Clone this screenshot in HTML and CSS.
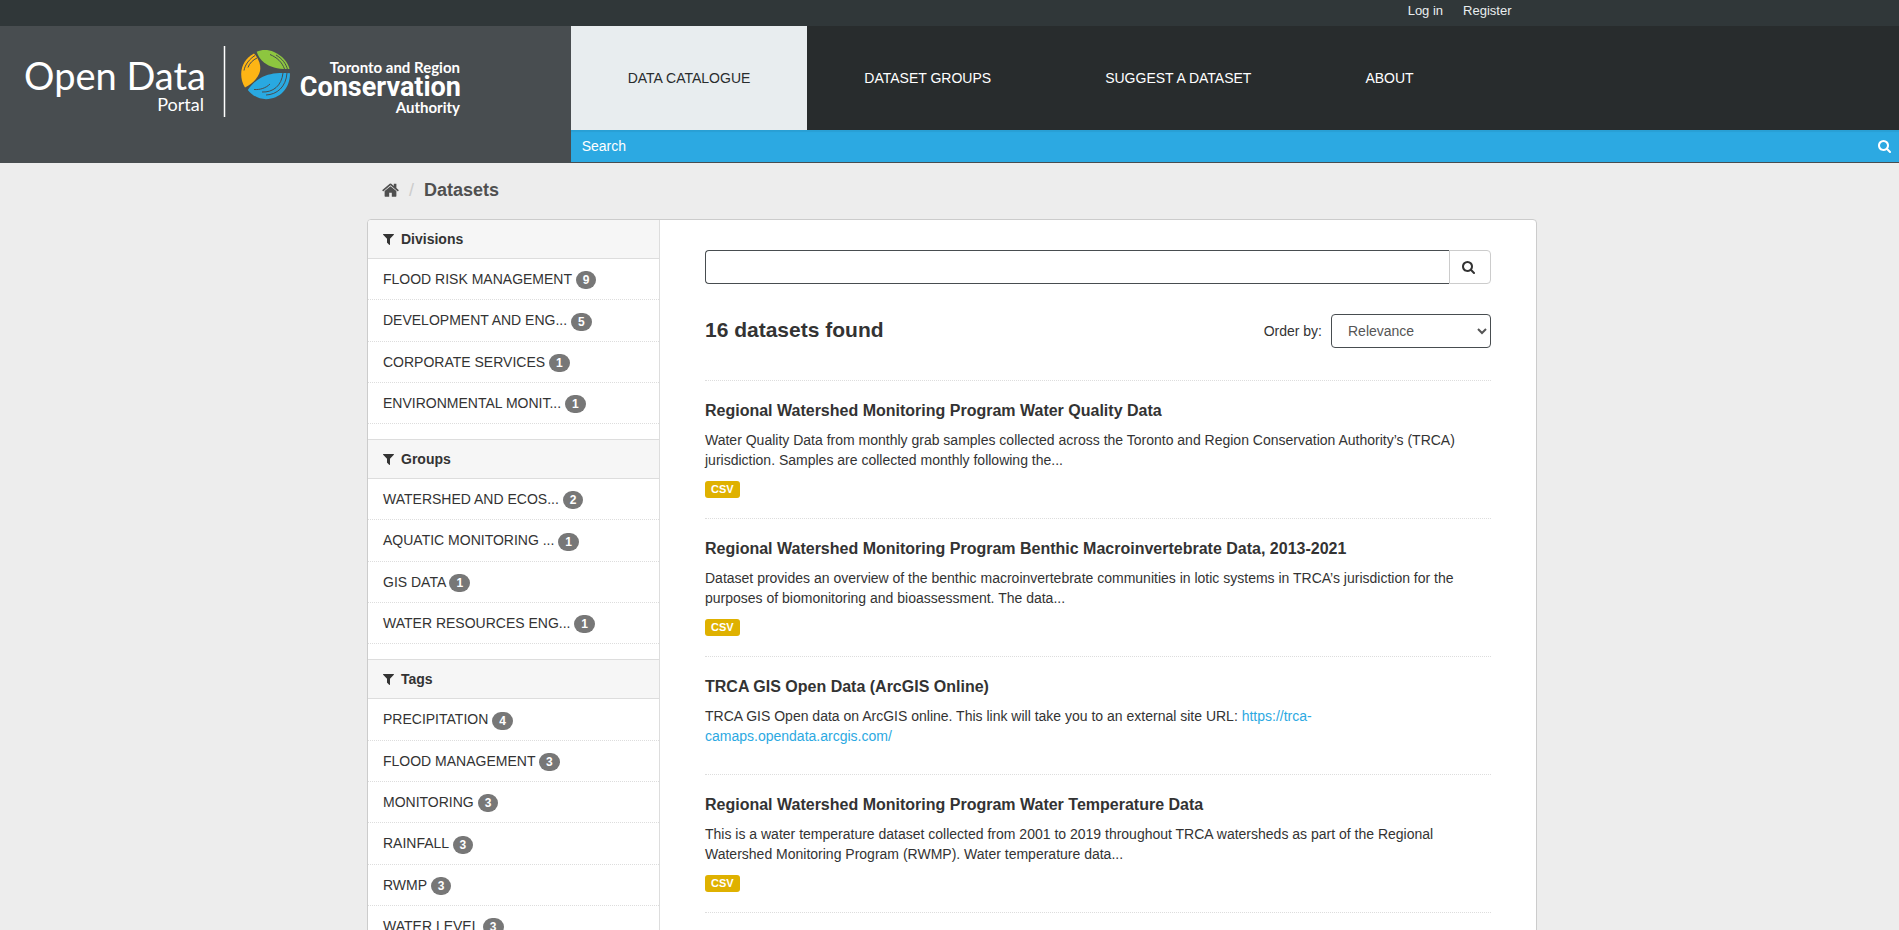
FILE: index.html
```
<!DOCTYPE html>
<html lang="en">
<head>
  <meta charset="UTF-8">
  <meta name="viewport" content="width=device-width, initial-scale=1.0">
  <title>Datasets - TRCA Open Data Portal</title>
  <link rel="stylesheet" href="styles.css">
</head>
<body>
  <!-- icon sprites -->
  <svg class="sprites" aria-hidden="true">
    <symbol id="icon-search" viewBox="0 0 1664 1664"><path d="M1152 704q0-185-131.500-316.500t-316.500-131.500-316.500 131.500-131.500 316.500 131.500 316.500 316.500 131.500 316.500-131.500 131.500-316.500zm512 832q0 52-38 90t-90 38q-54 0-90-38l-343-342q-179 124-399 124-143 0-273.500-55.500t-225-150-150-225-55.500-273.500 55.500-273.500 150-225 225-150 273.500-55.500 273.500 55.500 225 150 150 225 55.500 273.500q0 220-124 399l343 343q37 37 37 90z"/></symbol>
    <symbol id="icon-filter" viewBox="0 0 1410 1408"><path d="M1403 39q17 41-14 70l-493 493v742q0 42-39 59-13 5-25 5-27 0-45-19l-256-256q-19-19-19-45v-486l-493-493q-31-29-14-70 17-39 59-39h1280q42 0 59 39z"/></symbol>
    <symbol id="icon-home" viewBox="0 0 1664 1312"><path d="M1408 768v480q0 26-19 45t-45 19h-384v-384h-256v384h-384q-26 0-45-19t-19-45v-480q0-1 .5-3t.5-3l575-474 575 474q1 2 1 6zm223-69l-62 74q-8 9-21 11h-3q-13 0-21-7l-692-577-692 577q-12 8-24 7-13-2-21-11l-62-74q-8-10-7-23.500t11-21.500l719-599q32-26 76-26t76 26l244 204v-195q0-14 9-23t23-9h192q14 0 23 9t9 23v408l219 182q10 8 11 21.500t-7 23.500z"/></symbol>
  </svg>

  <div class="account">
    <nav class="account-links" aria-label="Account">
      <a href="#">Log in</a>
      <a href="#">Register</a>
    </nav>
  </div>

  <header class="masthead">
    <a class="logo" href="#" aria-label="Open Data Portal, Toronto and Region Conservation Authority">
      <svg width="470" height="100" viewBox="0 26 470 100">
        <text class="logo-title" x="206" y="90">Open Data</text>
        <text class="logo-sub" x="204" y="111">Portal</text>
        <path d="M224.500 46V117" stroke="#fff" stroke-width="1.500"/>
        <path fill="#8dc63f" d="M256.700 51.700C262 49.500 268 49.500 274 52C282 55.500 288 62 289.500 69C280 69.500 270 67.500 264 62.500C260.500 59.500 258 56 256.700 51.700Z"/>
        <path fill="#fdb515" d="M254 53.500C246 58 241.200 65 241.200 74C241.200 79 242.500 84 245 87.500C252 84 258.500 78 260 71C261.200 65 258.500 58.500 254 53.500Z"/>
        <path fill="#29a9e1" d="M290 73.300C278 72.500 268 73.500 260.500 78C255 81 251 85.500 247.800 90C252 95.500 259 99.200 266 99.200C280 99 290 88.500 290 73.300Z"/>
        <path class="logo-groove" d="M270 54.500C277 57.500 282 62 284.500 69M276 55C282 58.500 286 63.500 287.500 69.500M244 70.500C245 64.500 249.500 59 255 55.500M248 67.500C249.500 63 253 60 257 58M262 92C273 92.500 281.500 86 283 73M266 95C277 94.500 286 87 287 73M254 89.500C260 90 266 88 270 84"/>
        <text class="logo-name" x="460" y="73">Toronto and Region</text>
        <text class="logo-brand" x="461" y="96">Conservation</text>
        <text class="logo-name" x="460" y="113">Authority</text>
      </svg>
    </a>
    <div class="masthead-main">
      <nav class="main-nav" aria-label="Main">
        <a class="active" href="#">DATA CATALOGUE</a>
        <a href="#">DATASET GROUPS</a>
        <a href="#">SUGGEST A DATASET</a>
        <a href="#">ABOUT</a>
      </nav>
      <form class="site-search">
        <input type="text" placeholder="Search" aria-label="Search datasets">
        <button type="submit" aria-label="Search"><svg class="icon"><use href="#icon-search"/></svg></button>
      </form>
    </div>
  </header>

  <div class="main">
    <div class="container">
      <nav class="breadcrumb" aria-label="Breadcrumb">
        <a href="#" aria-label="Home"><svg class="icon-home"><use href="#icon-home"/></svg></a>
        <span class="divider">/</span>
        <a class="current" href="#">Datasets</a>
      </nav>

      <div class="wrapper">
        <aside class="sidebar">
          <section class="facet">
            <h2><svg class="icon-filter"><use href="#icon-filter"/></svg>Divisions</h2>
            <ul>
              <li><a href="#">FLOOD RISK MANAGEMENT <span class="badge">9</span></a></li>
              <li><a href="#">DEVELOPMENT AND ENG... <span class="badge">5</span></a></li>
              <li><a href="#">CORPORATE SERVICES <span class="badge">1</span></a></li>
              <li><a href="#">ENVIRONMENTAL MONIT... <span class="badge">1</span></a></li>
            </ul>
          </section>
          <section class="facet">
            <h2><svg class="icon-filter"><use href="#icon-filter"/></svg>Groups</h2>
            <ul>
              <li><a href="#">WATERSHED AND ECOS... <span class="badge">2</span></a></li>
              <li><a href="#">AQUATIC MONITORING ... <span class="badge">1</span></a></li>
              <li><a href="#">GIS DATA <span class="badge">1</span></a></li>
              <li><a href="#">WATER RESOURCES ENG... <span class="badge">1</span></a></li>
            </ul>
          </section>
          <section class="facet">
            <h2><svg class="icon-filter"><use href="#icon-filter"/></svg>Tags</h2>
            <ul>
              <li><a href="#">PRECIPITATION <span class="badge">4</span></a></li>
              <li><a href="#">FLOOD MANAGEMENT <span class="badge">3</span></a></li>
              <li><a href="#">MONITORING <span class="badge">3</span></a></li>
              <li><a href="#">RAINFALL <span class="badge">3</span></a></li>
              <li><a href="#">RWMP <span class="badge">3</span></a></li>
              <li><a href="#">WATER LEVEL <span class="badge">3</span></a></li>
            </ul>
          </section>
        </aside>

        <main class="primary">
          <form class="search-form">
            <div class="search-group">
              <input type="text" aria-label="Search datasets">
              <button type="submit" aria-label="Submit search"><svg class="icon"><use href="#icon-search"/></svg></button>
            </div>
            <div class="search-summary">
              <h1>16 datasets found</h1>
              <div class="order-by">
                <label for="order">Order by:</label>
                <select id="order">
                  <option>Relevance</option>
                  <option>Name Ascending</option>
                  <option>Name Descending</option>
                  <option>Last Modified</option>
                </select>
              </div>
            </div>
          </form>

          <ul class="dataset-list">
            <li>
              <h3><a href="#">Regional Watershed Monitoring Program Water Quality Data</a></h3>
              <p>Water Quality Data from monthly grab samples collected across the Toronto and Region Conservation Authority’s (TRCA) jurisdiction. Samples are collected monthly following the...</p>
              <a class="label" href="#">CSV</a>
            </li>
            <li>
              <h3><a href="#">Regional Watershed Monitoring Program Benthic Macroinvertebrate Data, 2013-2021</a></h3>
              <p>Dataset provides an overview of the benthic macroinvertebrate communities in lotic systems in TRCA’s jurisdiction for the purposes of biomonitoring and bioassessment. The data...</p>
              <a class="label" href="#">CSV</a>
            </li>
            <li>
              <h3><a href="#">TRCA GIS Open Data (ArcGIS Online)</a></h3>
              <p>TRCA GIS Open data on ArcGIS online. This link will take you to an external site URL: <a href="#">https://trca-<br>camaps.opendata.arcgis.com/</a></p>
            </li>
            <li>
              <h3><a href="#">Regional Watershed Monitoring Program Water Temperature Data</a></h3>
              <p>This is a water temperature dataset collected from 2001 to 2019 throughout TRCA watersheds as part of the Regional Watershed Monitoring Program (RWMP). Water temperature data...</p>
              <a class="label" href="#">CSV</a>
            </li>
            <li></li>
          </ul>
        </main>
      </div>
    </div>
  </div>
</body>
</html>
```

FILE: styles.css
```
* { box-sizing: border-box; }
body { margin: 0; font-family: Arial, "Liberation Sans", sans-serif; font-size: 14px; line-height: 20px;
       color: #333; background: #ededed; }
a { color: #333; text-decoration: none; }
h1, h2, h3, p, ul { margin: 0; padding: 0; }
ul { list-style: none; }
input, button, select { font-family: inherit; font-size: 14px; margin: 0; }
svg { display: block; }
.sprites { display: none; }
.icon { width: 13px; height: 13px; fill: currentColor; }

/* account bar */
.account { height: 26px; background: #303739; }
.account-links { display: flex; justify-content: flex-end; gap: 20px;
                 max-width: 1170px; margin: 0 auto; padding-right: 23px; }
.account-links a { color: #eaeeef; font-size: 13px; line-height: 22px; }

/* header */
.masthead { display: flex; background: #484d50; border-bottom: 1px solid #484d50; }
.logo { flex: 0 0 calc(30% + 1px); overflow: hidden; }
.logo text { text-anchor: end; fill: #fff; }
.logo-title { font: 400 38px Lato, sans-serif; }
.logo-sub { font: 400 18px Lato, sans-serif; }
.logo-name { font: 700 15px Lato, sans-serif; }
.logo-brand { font: 700 27px Roboto, sans-serif; }
.logo-groove { fill: none; stroke: #484d50; stroke-width: 1; }
.masthead-main { flex: 1; min-width: 0; }
.main-nav { display: flex; background: #282c2d; }
.main-nav a { padding: 42px 57px; color: #fff; line-height: 20px; }
.main-nav a.active { background: #e8edef; color: #282c2d; }
.site-search { display: flex; height: 32px; background: #2ca9e2; box-shadow: inset 0 2px 1px rgba(0,0,0,0.06); }
.site-search input { flex: 1; border: none; background: none; padding: 0 11px; color: #fff; }
.site-search input::placeholder { color: #fff; opacity: 1; }
.site-search button { border: none; background: none; padding: 0 8px; color: #fff; }

/* content */
.main { padding-left: 5px; }
.container { max-width: 1170px; margin: 0 auto; }
.breadcrumb { display: flex; align-items: center; padding: 0 15px 2px; height: 56px; font-size: 18px; line-height: 20px; }
.icon-home { width: 17px; height: 14px; fill: #505050; }
.divider { color: #ccc; padding: 0 10px; }
.breadcrumb .current { color: #505050; font-weight: bold; }
.wrapper { display: flex; background: #fff; border: 1px solid #ccc; border-radius: 4px; overflow: hidden; }

/* facets */
.sidebar { flex: 0 0 25%; border-right: 1px solid #ddd; }
.facet { padding-bottom: 15px; }
.facet h2 { display: flex; align-items: center; gap: 7px; padding: 10px 15px; font-size: 14px; line-height: 18px;
            background: #f6f6f6; border-top: 1px solid #ddd; border-bottom: 1px solid #ddd; }
.facet:first-child h2 { border-top: none; }
.icon-filter { width: 11px; height: 11px; fill: #333; }
.facet li { border-bottom: 1px dotted #ddd; }
.facet li a { display: block; padding: 10px 15px; }
.badge { display: inline-block; vertical-align: middle; padding: 3px 7px; border-radius: 10px;
         background: #777; color: #fff; font-size: 12px; font-weight: bold; line-height: 12px; }

/* search */
.primary { flex: 1; min-width: 0; padding: 30px 45px; }
.search-group { display: flex; }
.search-group input { flex: 1; height: 34px; padding: 6px 12px; border: 1px solid #484d50; border-right: none; border-radius: 4px 0 0 4px; }
.search-group button { width: 42px; padding: 0 12px; background: #fff; color: #333; border: 1px solid #ccc; border-radius: 0 4px 4px 0; }
.search-summary { display: flex; justify-content: space-between; align-items: flex-start; margin: 30px 0 32px; }
.search-summary h1 { font-size: 21px; line-height: 32px; }
.order-by { display: flex; align-items: center; gap: 9px; }
.order-by select { width: 160px; height: 34px; padding: 6px 12px; color: #555; background: #fff; border: 1px solid #484d50; border-radius: 4px; }

/* results */
.dataset-list li { border-top: 1px dotted #ddd; padding: 20px 0; min-height: 118px; }
.dataset-list h3 { font-size: 16px; line-height: 20px; margin-bottom: 9px; }
.dataset-list p { line-height: 20px; }
.dataset-list p a { color: #2ca9e2; }
.label { display: inline-block; vertical-align: top; margin-top: 11px; padding: 3px 6px; border-radius: 3px;
         background: #dfb100; color: #fff; font-size: 11px; font-weight: bold; line-height: 11px; }
```
